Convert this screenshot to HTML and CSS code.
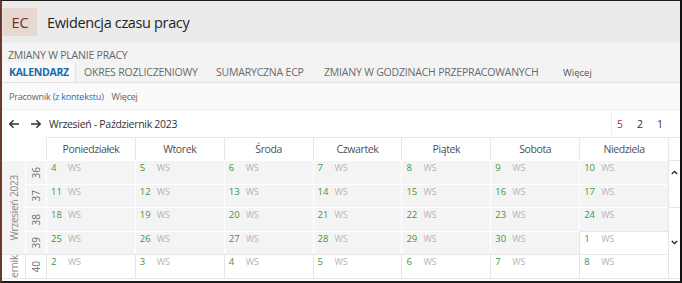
FILE: index.html
```html
<!DOCTYPE html>
<html lang="pl">
<head>
<meta charset="utf-8">
<link rel="stylesheet" href="styles.css">
</head>
<body>
<div class="frame">
  <header class="appbar">
    <div class="badge">EC</div>
    <div class="apptitle">Ewidencja czasu pracy</div>
  </header>
  <section class="section">
    <div class="subtitle">ZMIANY W PLANIE PRACY</div>
    <nav class="tabs">
      <div class="tab active">KALENDARZ</div>
      <div class="tab t2">OKRES ROZLICZENIOWY</div>
      <div class="tab t3">SUMARYCZNA ECP</div>
      <div class="tab t4">ZMIANY W GODZINACH PRZEPRACOWANYCH</div>
      <div class="tab more">Więcej</div>
    </nav>
  </section>
  <div class="toolbar">
    <span>Pracownik <span class="link">(z kontekstu)</span></span>
    <span class="tb-more">Więcej</span>
  </div>
  <div class="main">
    <div class="navrow">
      <div class="navleft">
        <svg class="arrow back" width="12" height="10" viewBox="0 0 12 10"><path d="M11 5H1.8M5.6 1.2L1.8 5l3.8 3.8" fill="none" stroke="#333" stroke-width="1.5"/></svg>
        <svg class="arrow fwd" width="12" height="10" viewBox="0 0 12 10"><path d="M1 5h9.2M6.4 1.2L10.2 5 6.4 8.8" fill="none" stroke="#333" stroke-width="1.5"/></svg>
        <span class="period">Wrzesień - Październik 2023</span>
      </div>
      <div class="pager">
        <span class="pg cur">5</span><span class="pg">2</span><span class="pg">1</span>
      </div>
    </div>
    <div class="cal">
      <div class="hcorner"></div>
      <div class="hcorner"></div>
      <div class="hd">Poniedziałek</div>
      <div class="hd">Wtorek</div>
      <div class="hd">Środa</div>
      <div class="hd">Czwartek</div>
      <div class="hd">Piątek</div>
      <div class="hd">Sobota</div>
      <div class="hd">Niedziela</div>
      <div class="hscroll"></div>

      <div class="month sep"><span class="vtext">Wrzesień 2023</span></div>
      <div class="week sep"><span class="vtext">36</span></div>
      <div class="day sep"><span class="n">4</span><span class="ws">WS</span></div>
      <div class="day sep"><span class="n">5</span><span class="ws">WS</span></div>
      <div class="day sep"><span class="n">6</span><span class="ws">WS</span></div>
      <div class="day sep"><span class="n">7</span><span class="ws">WS</span></div>
      <div class="day sep"><span class="n">8</span><span class="ws">WS</span></div>
      <div class="day sep"><span class="n">9</span><span class="ws">WS</span></div>
      <div class="day sep"><span class="n">10</span><span class="ws">WS</span></div>
      <div class="scroll up"><svg width="7" height="5" viewBox="0 0 7 5"><path d="M0.8 4L3.5 1.3 6.2 4" fill="none" stroke="#222" stroke-width="1.3"/></svg></div>

      <div class="week sep"><span class="vtext">37</span></div>
      <div class="day sep"><span class="n">11</span><span class="ws">WS</span></div>
      <div class="day sep"><span class="n">12</span><span class="ws">WS</span></div>
      <div class="day sep"><span class="n">13</span><span class="ws">WS</span></div>
      <div class="day sep"><span class="n">14</span><span class="ws">WS</span></div>
      <div class="day sep"><span class="n">15</span><span class="ws">WS</span></div>
      <div class="day sep"><span class="n">16</span><span class="ws">WS</span></div>
      <div class="day sep"><span class="n">17</span><span class="ws">WS</span></div>

      <div class="week sep"><span class="vtext">38</span></div>
      <div class="day sep"><span class="n">18</span><span class="ws">WS</span></div>
      <div class="day sep"><span class="n">19</span><span class="ws">WS</span></div>
      <div class="day sep"><span class="n">20</span><span class="ws">WS</span></div>
      <div class="day sep"><span class="n">21</span><span class="ws">WS</span></div>
      <div class="day sep"><span class="n">22</span><span class="ws">WS</span></div>
      <div class="day sep"><span class="n">23</span><span class="ws">WS</span></div>
      <div class="day sep"><span class="n">24</span><span class="ws">WS</span></div>
      <div class="scroll down"><svg width="7" height="5" viewBox="0 0 7 5"><path d="M0.8 1L3.5 3.7 6.2 1" fill="none" stroke="#222" stroke-width="1.3"/></svg></div>

      <div class="week sep"><span class="vtext">39</span></div>
      <div class="day sep"><span class="n">25</span><span class="ws">WS</span></div>
      <div class="day sep"><span class="n">26</span><span class="ws">WS</span></div>
      <div class="day sep"><span class="n">27</span><span class="ws">WS</span></div>
      <div class="day sep"><span class="n">28</span><span class="ws">WS</span></div>
      <div class="day sep"><span class="n">29</span><span class="ws">WS</span></div>
      <div class="day sep"><span class="n">30</span><span class="ws">WS</span></div>
      <div class="day"><span class="n">1</span><span class="ws">WS</span></div>

      <div class="month clip"><span class="vtext">Październik</span></div>
      <div class="week"><span class="vtext">40</span></div>
      <div class="day"><span class="n">2</span><span class="ws">WS</span></div>
      <div class="day"><span class="n">3</span><span class="ws">WS</span></div>
      <div class="day"><span class="n">4</span><span class="ws">WS</span></div>
      <div class="day"><span class="n">5</span><span class="ws">WS</span></div>
      <div class="day"><span class="n">6</span><span class="ws">WS</span></div>
      <div class="day"><span class="n">7</span><span class="ws">WS</span></div>
      <div class="day"><span class="n">8</span><span class="ws">WS</span></div>
    </div>
  </div>
</div>
</body>
</html>
```
FILE: styles.css
```css
* { box-sizing: border-box; }
html, body { margin: 0; padding: 0; }
body {
  width: 682px;
  height: 283px;
  overflow: hidden;
  font-family: "Open Sans", "Noto Sans", sans-serif;
  color: #333;
  background: #1a1a1a;
}
.frame {
  width: 682px;
  height: 283px;
  border-top: 1px solid #1c1c1c;
  border-left: 2px solid #6b3a2e;
  border-right: 2px solid #111;
  border-bottom: 2px solid #1c1c1c;
  background: #fff;
  overflow: hidden;
  display: flex;
  flex-direction: column;
}
.appbar {
  height: 42px;
  background: #ebebeb;
  display: flex;
  align-items: center;
  flex-shrink: 0;
}
.badge {
  width: 34px;
  height: 28px;
  margin-left: 1px;
  background: #e6d7d1;
  color: #7a2b1b;
  font-size: 14.5px;
  display: flex;
  align-items: center;
  justify-content: center;
}
.apptitle {
  margin-left: 10px;
  font-size: 14.5px;
  color: #1f1f1f;
  letter-spacing: -0.35px;
}
.section {
  background: #f3f3f3;
  flex-shrink: 0;
}
.subtitle {
  height: 20px;
  padding: 5px 0 0 6px;
  font-size: 10.5px;
  color: #666;
  line-height: 14px;
  letter-spacing: -0.2px;
}
.tabs {
  display: flex;
  height: 20px;
  border-bottom: 1px solid #e3e3e3;
  font-size: 10.5px;
  letter-spacing: -0.2px;
  line-height: 19px;
}
.tab {
  color: #6a6a6a;
  white-space: nowrap;
  flex-shrink: 0;
}
.tab.active {
  background: #f9f9f9;
  color: #1a6aa6;
  font-weight: 700;
  padding: 0 0 0 7px;
  border-right: 1px solid #e3e3e3;
  width: 74px;
  letter-spacing: -0.3px;
}
.tab.t2 { margin-left: 8px; width: 132px; }
.tab.t3 { width: 108px; }
.tab.t4 { width: 239px; }
.tab.more { font-size: 9.5px; color: #555; letter-spacing: 0; }
.toolbar {
  height: 27px;
  background: #fafafa;
  border-bottom: 1px solid #efefef;
  display: flex;
  align-items: center;
  padding-left: 7px;
  font-size: 9px;
  letter-spacing: -0.2px;
  color: #666;
  flex-shrink: 0;
}
.link { color: #2b6bb8; }
.tb-more { margin-left: 8px; }
.main {
  flex: 1;
  display: flex;
  flex-direction: column;
}
.navrow {
  height: 27px;
  display: flex;
  align-items: center;
  justify-content: space-between;
  flex-shrink: 0;
}
.navleft {
  display: flex;
  align-items: center;
  padding-left: 6px;
}
.arrow.back { margin-right: 10px; }
.arrow.fwd { margin-right: 7px; }
.period {
  font-size: 10.5px;
  letter-spacing: -0.3px;
  color: #333;
}
.pager {
  display: flex;
  align-items: center;
  height: 23px;
  border-left: 1px solid #ececec;
  padding-left: 5px;
  margin-right: 17px;
  font-size: 10.5px;
  color: #333;
}
.pg { margin-right: 14px; }
.pg:last-child { margin-right: 0; }
.pg.cur { color: #b23a1a; }
.cal {
  display: grid;
  grid-template-columns: 23px 21px repeat(7, 1fr) 12px;
  grid-template-rows: 23px repeat(5, 23.5px);
  border-bottom: 1px solid #e6e6e6;
}
.hcorner { background: #fff; }
.hd {
  border-top: 1px solid #e8e8e8;
  border-left: 1px solid #e8e8e8;
  text-align: center;
  font-size: 10.5px;
  letter-spacing: -0.4px;
  color: #505050;
  line-height: 22px;
  background: #fff;
}
.hscroll {
  border-left: 1px solid #e8e8e8;
  border-top: 1px solid #e8e8e8;
}
.month, .week, .day {
  border-top: 1px solid #e6e6e6;
  border-left: 1px solid #e6e6e6;
  background: #fff;
  overflow: hidden;
}
.sep { background: #f4f4f4; border-top-color: #fff; border-left-color: #fff; }
.month { grid-row: span 4; display: flex; align-items: center; justify-content: center; border-left: none; }
.month.sep { border-left: none; }
.month.clip { grid-row: span 1; align-items: flex-start; }
.month.clip .vtext { flex-shrink: 0; }
.week { display: flex; align-items: center; justify-content: center; }
.vtext {
  writing-mode: vertical-rl;
  transform: rotate(180deg);
  white-space: nowrap;
  color: #777;
  line-height: 1;
}
.month .vtext { color: #888; font-size: 10px; letter-spacing: -0.2px; }
.week .vtext { font-size: 10px; color: #6e6e6e; }
.day {
  display: flex;
  align-items: flex-start;
  padding: 0 0 0 4px;
  font-size: 9.5px;
  line-height: 13px;
}
.n { width: 17px; color: #3c973c; }
.ws { color: #b5b5b5; font-size: 9px; letter-spacing: -0.2px; }
.scroll {
  grid-column: 10;
  border-left: 1px solid #e6e6e6;
  border-top: 1px solid #e6e6e6;
  display: flex;
  justify-content: center;
  background: #fff;
}
.scroll.up { grid-row: 2 / span 2; padding-top: 9px; }
.scroll.down { grid-row: 4 / span 3; align-items: center; }
```
